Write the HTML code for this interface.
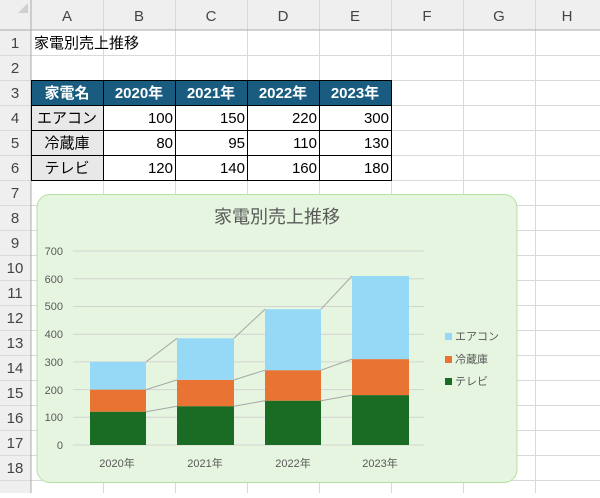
<!DOCTYPE html>
<html><head><meta charset="utf-8"><style>
html,body{margin:0;padding:0;background:#fff;}
svg text{font-family:"Liberation Sans","Noto Sans CJK JP",sans-serif;}
</style></head><body>
<svg width="600" height="493" viewBox="0 0 600 493" xmlns="http://www.w3.org/2000/svg">
<rect x="0" y="0" width="600" height="30" fill="#efefef"/>
<rect x="0" y="0" width="31" height="493" fill="#efefef"/>
<g stroke="#d9d9d9" stroke-width="1">
<line x1="103.5" y1="0" x2="103.5" y2="493"/><line x1="175.5" y1="0" x2="175.5" y2="493"/>
<line x1="247.5" y1="0" x2="247.5" y2="493"/><line x1="319.5" y1="0" x2="319.5" y2="493"/>
<line x1="391.5" y1="0" x2="391.5" y2="493"/><line x1="463.5" y1="0" x2="463.5" y2="493"/>
<line x1="535.5" y1="0" x2="535.5" y2="493"/>
<line x1="0" y1="55.5" x2="600" y2="55.5"/><line x1="0" y1="80.5" x2="600" y2="80.5"/>
<line x1="0" y1="105.5" x2="600" y2="105.5"/><line x1="0" y1="130.5" x2="600" y2="130.5"/>
<line x1="0" y1="155.5" x2="600" y2="155.5"/><line x1="0" y1="180.5" x2="600" y2="180.5"/>
<line x1="0" y1="205.5" x2="600" y2="205.5"/><line x1="0" y1="230.5" x2="600" y2="230.5"/>
<line x1="0" y1="255.5" x2="600" y2="255.5"/><line x1="0" y1="280.5" x2="600" y2="280.5"/>
<line x1="0" y1="305.5" x2="600" y2="305.5"/><line x1="0" y1="330.5" x2="600" y2="330.5"/>
<line x1="0" y1="355.5" x2="600" y2="355.5"/><line x1="0" y1="380.5" x2="600" y2="380.5"/>
<line x1="0" y1="405.5" x2="600" y2="405.5"/><line x1="0" y1="430.5" x2="600" y2="430.5"/>
<line x1="0" y1="455.5" x2="600" y2="455.5"/><line x1="0" y1="480.5" x2="600" y2="480.5"/>
</g>
<line x1="0" y1="30" x2="600" y2="30" stroke="#ababab"/>
<line x1="31" y1="0" x2="31" y2="493" stroke="#ababab"/>
<polygon points="18,13 28,13 28,3" fill="#d0d0d0"/>
<g font-size="15" fill="#444" text-anchor="middle">
<text x="67" y="21">A</text><text x="139" y="21">B</text><text x="211" y="21">C</text><text x="283" y="21">D</text><text x="355" y="21">E</text><text x="427" y="21">F</text><text x="499" y="21">G</text><text x="567" y="21">H</text>
<text x="15" y="48">1</text><text x="15" y="73">2</text><text x="15" y="98">3</text><text x="15" y="123">4</text><text x="15" y="148">5</text><text x="15" y="173">6</text><text x="15" y="198">7</text><text x="15" y="223">8</text><text x="15" y="248">9</text><text x="15" y="273">10</text><text x="15" y="298">11</text><text x="15" y="323">12</text><text x="15" y="348">13</text><text x="15" y="373">14</text><text x="15" y="398">15</text><text x="15" y="423">16</text><text x="15" y="448">17</text><text x="15" y="473">18</text>
</g>
<text x="34" y="48" font-size="15" fill="#000">家電別売上推移</text>
<rect x="31.5" y="80.5" width="360" height="25" fill="#195c80"/>
<rect x="31.5" y="105.5" width="72" height="75" fill="#e8e8e8"/>
<g stroke="#000" stroke-width="1" fill="none">
<rect x="31.5" y="80.5" width="360" height="100"/>
<line x1="31.5" y1="130.5" x2="391.5" y2="130.5"/><line x1="31.5" y1="155.5" x2="391.5" y2="155.5"/><line x1="31.5" y1="105.5" x2="391.5" y2="105.5"/>
<line x1="103.5" y1="80.5" x2="103.5" y2="180.5"/><line x1="175.5" y1="80.5" x2="175.5" y2="180.5"/><line x1="247.5" y1="80.5" x2="247.5" y2="180.5"/><line x1="319.5" y1="80.5" x2="319.5" y2="180.5"/>
</g>
<g font-size="15" font-weight="bold" fill="#fff" text-anchor="middle">
<text x="67" y="98">家電名</text><text x="139" y="98">2020年</text><text x="211" y="98">2021年</text><text x="283" y="98">2022年</text><text x="355" y="98">2023年</text>
</g>
<g font-size="15" fill="#000" text-anchor="middle">
<text x="67" y="123">エアコン</text><text x="67" y="148">冷蔵庫</text><text x="67" y="173">テレビ</text>
</g>
<g font-size="15" fill="#000" text-anchor="end">
<text x="173" y="123">100</text><text x="245" y="123">150</text><text x="317" y="123">220</text><text x="389" y="123">300</text>
<text x="173" y="148">80</text><text x="245" y="148">95</text><text x="317" y="148">110</text><text x="389" y="148">130</text>
<text x="173" y="173">120</text><text x="245" y="173">140</text><text x="317" y="173">160</text><text x="389" y="173">180</text>
</g>
<rect x="37" y="194.5" width="480" height="288" rx="13" fill="#e6f5e0" stroke="#b4e0a0"/>
<text x="277" y="223" font-size="18" fill="#595959" text-anchor="middle">家電別売上推移</text>
<g stroke="#d4d4d4" stroke-width="1">
<line x1="73" y1="251" x2="424" y2="251"/><line x1="73" y1="278.7" x2="424" y2="278.7"/><line x1="73" y1="306.5" x2="424" y2="306.5"/><line x1="73" y1="334.2" x2="424" y2="334.2"/><line x1="73" y1="361.9" x2="424" y2="361.9"/><line x1="73" y1="389.6" x2="424" y2="389.6"/><line x1="73" y1="417.3" x2="424" y2="417.3"/><line x1="73" y1="445" x2="424" y2="445"/>
</g>
<g font-size="11" fill="#595959" text-anchor="end">
<text x="63" y="255">700</text><text x="63" y="283">600</text><text x="63" y="310">500</text><text x="63" y="338">400</text><text x="63" y="366">300</text><text x="63" y="394">200</text><text x="63" y="421">100</text><text x="63" y="449">0</text>
</g>
<g>
<rect x="90" y="411.7" width="56" height="33.3" fill="#1a6b24"/><rect x="90" y="389.6" width="56" height="22.1" fill="#e97332"/><rect x="90" y="361.9" width="56" height="27.7" fill="#96d9f6"/>
<rect x="177" y="406.2" width="57" height="38.8" fill="#1a6b24"/><rect x="177" y="379.9" width="57" height="26.3" fill="#e97332"/><rect x="177" y="338.3" width="57" height="41.6" fill="#96d9f6"/>
<rect x="265" y="400.7" width="56" height="44.3" fill="#1a6b24"/><rect x="265" y="370.2" width="56" height="30.5" fill="#e97332"/><rect x="265" y="309.2" width="56" height="61" fill="#96d9f6"/>
<rect x="352" y="395.1" width="57" height="49.9" fill="#1a6b24"/><rect x="352" y="359.1" width="57" height="36" fill="#e97332"/><rect x="352" y="276" width="57" height="83.1" fill="#96d9f6"/>
</g>
<g stroke="#a6a6a6" stroke-width="1" fill="none">
<line x1="146" y1="411.7" x2="177" y2="406.2"/><line x1="234" y1="406.2" x2="265" y2="400.7"/><line x1="321" y1="400.7" x2="352" y2="395.1"/>
<line x1="146" y1="389.6" x2="177" y2="379.9"/><line x1="234" y1="379.9" x2="265" y2="370.2"/><line x1="321" y1="370.2" x2="352" y2="359.1"/>
<line x1="146" y1="361.9" x2="177" y2="338.3"/><line x1="234" y1="338.3" x2="265" y2="309.2"/><line x1="321" y1="309.2" x2="352" y2="276"/>
</g>
<g font-size="11" fill="#595959" text-anchor="middle">
<text x="117" y="467">2020年</text><text x="205" y="467">2021年</text><text x="293" y="467">2022年</text><text x="380" y="467">2023年</text>
</g>
<rect x="445" y="333" width="7" height="7" fill="#96d9f6"/>
<rect x="445" y="356" width="7" height="7" fill="#e97332"/>
<rect x="445" y="378" width="7" height="7" fill="#1a6b24"/>
<g font-size="11" fill="#595959">
<text x="455" y="340">エアコン</text><text x="455" y="363">冷蔵庫</text><text x="455" y="385">テレビ</text>
</g>
</svg>
</body></html>
